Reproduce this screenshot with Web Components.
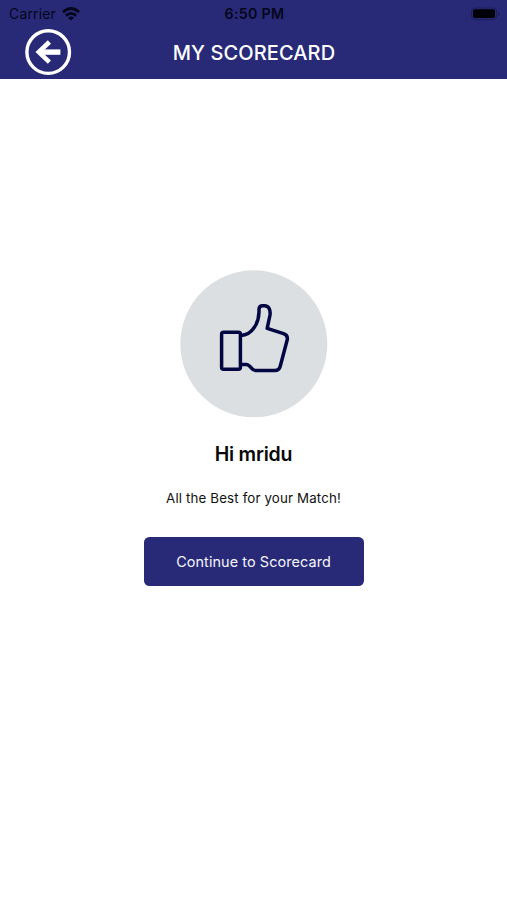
<!DOCTYPE html>
<html lang="en">
<head>
<meta charset="utf-8">
<title>My Scorecard</title>
<style>
html,body{margin:0;height:100%;background:#fff}
body{font-family:Inter,"Liberation Sans",sans-serif;overflow:hidden}
</style>
</head>
<body>
<score-screen></score-screen>
<script>
const define = (name, html) => customElements.define(name, class extends HTMLElement {
  constructor() {
    super();
    this.attachShadow({ mode: 'open' }).innerHTML = html;
  }
});

define('status-bar', `
<style>
:host{display:grid;grid-template-columns:1fr auto 1fr;align-items:center;height:27px;padding:0 7px 0 9px;color:#05061c;font-size:14px;line-height:27px;box-sizing:border-box}
.left{display:flex;align-items:center;gap:6px;letter-spacing:.15px}
.time{font-weight:600;font-size:14.2px;letter-spacing:.3px}
.right{justify-self:end;display:flex}
svg{display:block}
</style>
<div class="left"><span>Carrier</span>
<svg width="18" height="14" viewBox="0 0 18 14" fill="none" stroke="#05061c" stroke-width="2.8"><path d="M1 5.1Q9-2.1 17 5.1M3.9 8.6Q9 4.1 14.1 8.6"/><path d="M9 13.6L6.1 10.7Q9 8.2 11.9 10.7Z" fill="#05061c" stroke="none"/></svg></div>
<span class="time">6:50 PM</span>
<div class="right"><svg width="29" height="14" viewBox="0 0 29 14"><rect x=".6" y="1" width="25" height="11.6" rx="3" fill="none" stroke="#1c1e58"/><rect x="2" y="2.2" width="22" height="8.8" rx="1.6" fill="#000006"/><path d="M27 5v4q1.6-.6 1.6-2T27 5Z" fill="#1c1e58"/></svg></div>
`);

define('nav-bar', `
<style>
:host{display:grid;grid-template-columns:1fr auto 1fr;align-items:center;height:52px;padding:0 23px 0 24px;box-sizing:border-box;color:#fff}
h1{margin:0;font-size:20px;line-height:24px;font-weight:500;letter-spacing:.1px;padding-bottom:1px}
button{all:unset;width:48px;height:48px;margin-top:-3px}
svg{display:block}
</style>
<button aria-label="Back"><svg width="48" height="48" viewBox="0 0 48 48" fill="none" stroke="#fff"><circle cx="24.2" cy="24.1" r="21.3" stroke-width="3.4"/><path d="M36.4 24.1H15" stroke-width="5.4"/><path d="M25.4 14L14.8 24.1L25.4 34.2" stroke-width="4.6"/></svg></button>
<h1><slot></slot></h1>
`);

define('thumb-badge', `
<style>
:host{display:block}
svg{display:block}
</style>
<svg width="149" height="149" viewBox="179 269 149 149" fill="none" stroke="#020742" stroke-width="3.5" stroke-linejoin="round" stroke-linecap="round"><circle cx="253.8" cy="343.8" r="73.5" fill="#dcdfe1" stroke="none"/><rect x="221.6" y="332.3" width="18.8" height="37" rx="2"/><path d="M241 335.4C252 335.5 258.8 323 259 312V309Q259.3 305.8 262.5 305.8H264.5C269 305.8 270.6 310 270 315L267.2 328.4L283.5 333.6Q288 335 287.3 339.5L280.3 366Q279.2 370.5 275 370.5H255.5C251 370.5 251 364.4 246 364.4H241"/></svg>
`);

define('primary-button', `
<style>
:host{display:block}
button{all:unset;display:flex;align-items:center;justify-content:center;width:220px;height:49px;box-sizing:border-box;padding-bottom:1px;border-radius:5.5px;background:#282a77;color:#f5f5fb;font-size:14.4px;letter-spacing:.1px}
</style>
<button><slot></slot></button>
`);

define('score-screen', `
<style>
:host{display:block;height:900px;background:#fff}
header{background:#282a77;height:79px}
main{display:flex;flex-direction:column;align-items:center;padding-top:190px}
h2{margin:23px 0 0;font-size:19.5px;line-height:26px;font-weight:600;letter-spacing:-.2px;color:#080808}
p{margin:21px 0 0;font-size:13.3px;line-height:20px;letter-spacing:.15px;color:#111}
primary-button{margin-top:29px}
</style>
<header><status-bar></status-bar><nav-bar>MY SCORECARD</nav-bar></header>
<main><thumb-badge></thumb-badge><h2>Hi mridu</h2><p>All the Best for your Match!</p><primary-button>Continue to Scorecard</primary-button></main>
`);
</script>
</body>
</html>
